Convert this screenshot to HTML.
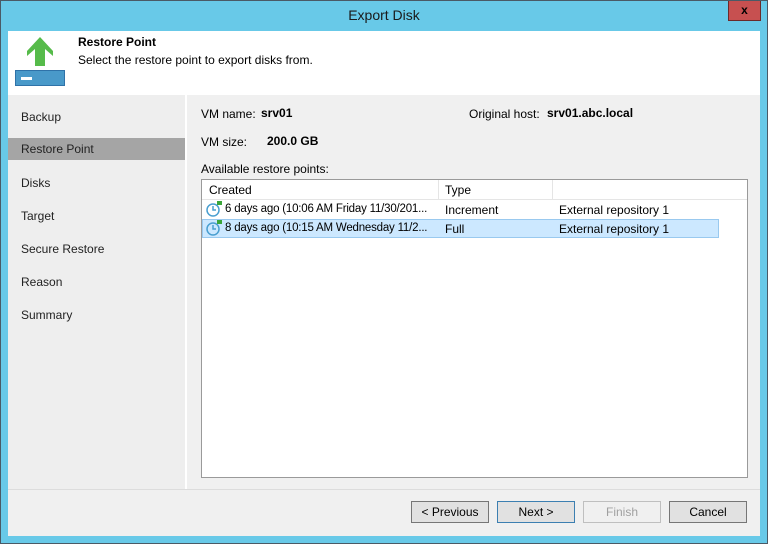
<!DOCTYPE html>
<html><head><style>
*{margin:0;padding:0;box-sizing:border-box}
body{width:768px;height:544px;background:#68c9e8;font-family:"Liberation Sans",sans-serif;font-size:12px;color:#000;position:relative;overflow:hidden}
.frame{position:absolute;left:0;top:0;width:768px;height:544px;border:1px solid #4a5a66}
.title{position:absolute;left:0;top:7px;width:768px;text-align:center;font-size:14px;color:#1a1a1a}
.close{position:absolute;left:728px;top:1px;width:33px;height:20px;background:#c75050;border:1px solid #6b2a2a;border-top:none;color:#000;font-weight:bold;text-align:center;font-size:12px;line-height:18px}
.client{position:absolute;left:8px;top:31px;width:752px;height:505px;background:#f0f0f0}
.head{position:absolute;left:0;top:0;width:752px;height:64px;background:#fff}
.nav{position:absolute;left:0;top:64px;width:179px;height:394px;background:#eeeeee;border-right:2px solid #fff}
.nav div{position:absolute;left:0;width:177px;height:22px;line-height:22px;padding-left:13px;color:#222}
.nav .sel{background:#a5a5a5}
.abs{position:absolute;white-space:nowrap}
.table{position:absolute;left:193px;top:148px;width:547px;height:299px;background:#fff;border:1px solid #9a9a9a}
.btn{position:absolute;top:470px;width:78px;height:22px;border:1px solid #767676;background:#e1e1e1;text-align:center;line-height:20px}
</style></head><body>
<div class="frame"></div>
<div class="title">Export Disk</div>
<div class="close">x</div>
<div class="client">
 <div class="head">
  <svg class="abs" style="left:0;top:0" width="64" height="60"><polygon points="32,6 45,20 45,25 37,18 37,35 27,35 27,18 19,25 19,20" fill="#56bb4a"/><rect x="7.5" y="39.5" width="49" height="15" fill="#4999c9" stroke="#2f72a8"/><rect x="13" y="46" width="11" height="3" fill="#fff"/></svg>
  <div class="abs" style="left:70px;top:4px;font-weight:bold">Restore Point</div>
  <div class="abs" style="left:70px;top:22px">Select the restore point to export disks from.</div>
 </div>
 <div class="nav">
  <div style="top:11px">Backup</div>
  <div class="sel" style="top:43px">Restore Point</div>
  <div style="top:77px">Disks</div><div style="top:110px">Target</div><div style="top:143px">Secure Restore</div><div style="top:176px">Reason</div><div style="top:209px">Summary</div>
 </div>
 <div class="abs" style="left:193px;top:76px">VM name:</div>
 <div class="abs" style="left:253px;top:75px;font-weight:bold">srv01</div>
 <div class="abs" style="left:461px;top:76px">Original host:</div>
 <div class="abs" style="left:539px;top:75px;font-weight:bold">srv01.abc.local</div>
 <div class="abs" style="left:193px;top:104px">VM size:</div>
 <div class="abs" style="left:259px;top:103px;font-weight:bold">200.0 GB</div>
 <div class="abs" style="left:193px;top:131px">Available restore points:</div>
 <div class="table">
  <div class="abs" style="left:0;top:0;width:545px;height:20px;border-bottom:1px solid #e5e5e5"></div>
  <div class="abs" style="left:236px;top:0;width:1px;height:20px;background:#e5e5e5"></div>
  <div class="abs" style="left:350px;top:0;width:1px;height:20px;background:#e5e5e5"></div>
  <div class="abs" style="left:7px;top:3px">Created</div>
  <div class="abs" style="left:243px;top:3px">Type</div>
  <div class="abs" style="left:0;top:39px;width:517px;height:19px;background:#cce8ff;border:1px solid #99c9ef"></div>
  <svg class="abs" style="left:3px;top:20px" width="18" height="40"><g fill="none" stroke="#4a9fd0" stroke-width="1.5"><circle cx="8" cy="10" r="6"/><path d="M8 6v4h3"/><circle cx="8" cy="29" r="6"/><path d="M8 25v4h3"/></g><rect x="12" y="1" width="5" height="4" fill="#3aa63a"/><rect x="12" y="20" width="5" height="4" fill="#3aa63a"/></svg>
  <div class="abs" style="left:23px;top:23px;font-size:11.5px;letter-spacing:-0.2px">6 days ago (10:06 AM Friday 11/30/201...</div>
  <div class="abs" style="left:243px;top:23px">Increment</div>
  <div class="abs" style="left:357px;top:23px">External repository 1</div>
  <div class="abs" style="left:23px;top:42px;font-size:11.5px;letter-spacing:-0.2px">8 days ago (10:15 AM Wednesday 11/2...</div>
  <div class="abs" style="left:243px;top:42px">Full</div>
  <div class="abs" style="left:357px;top:42px">External repository 1</div>
 </div>
 <div class="abs" style="left:0;top:458px;width:752px;height:1px;background:#dcdcdc"></div>
 <div class="btn" style="left:403px">&lt; Previous</div>
 <div class="btn" style="left:489px;border-color:#3c7fb1">Next &gt;</div>
 <div class="btn" style="left:575px;border-color:#bfbfbf;background:#f0f0f0;color:#a0a0a0">Finish</div>
 <div class="btn" style="left:661px">Cancel</div>
</div>
</body></html>
